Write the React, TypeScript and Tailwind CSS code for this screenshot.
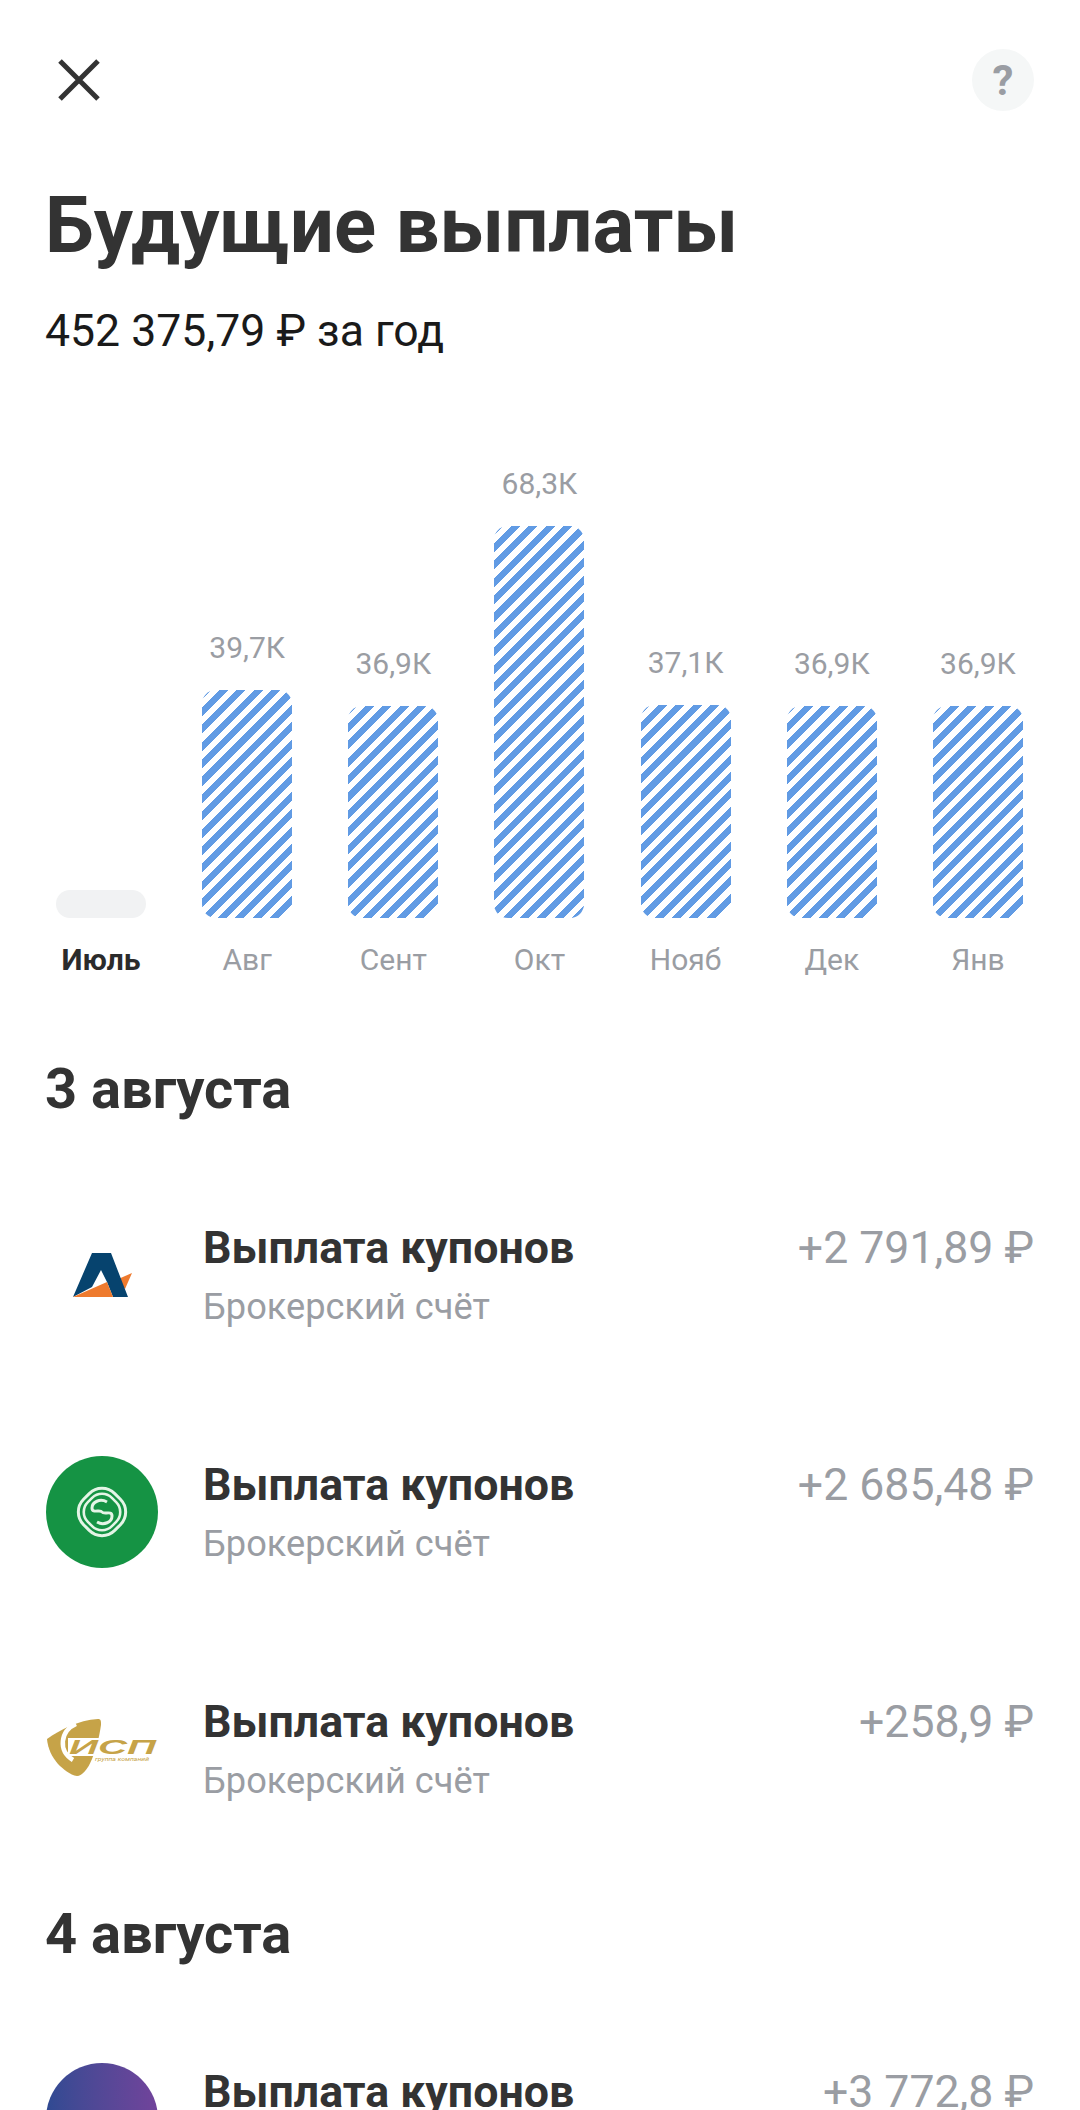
import React from 'react';

const bars = [
  { month: 'Июль', height: 'h-[28px]', active: true },
  { month: 'Авг', value: '39,7К', height: 'h-[228px]' },
  { month: 'Сент', value: '36,9К', height: 'h-[212px]' },
  { month: 'Окт', value: '68,3К', height: 'h-[392px]' },
  { month: 'Нояб', value: '37,1К', height: 'h-[213px]' },
  { month: 'Дек', value: '36,9К', height: 'h-[212px]' },
  { month: 'Янв', value: '36,9К', height: 'h-[212px]' },
];

// --- Logos ---

const LogoA = () => (
  <svg viewBox="0 0 112 112" className="w-[112px] h-[112px]">
    <path d="M70 61 L86 54 L79 70 Z" fill="#ee7a2e" />
    <path d="M27 78 L46 34 L65 34 L82 78 L67 78 L61 63 L55 51 L46 68 Z" fill="#06436e" />
    <path d="M27 78 L61 63 L67 78 Z" fill="#ee7a2e" />
  </svg>
);

const LogoGreen = () => (
  <div className="w-[112px] h-[112px] rounded-full bg-[#159344] flex items-center justify-center">
    <svg viewBox="0 0 60 60" className="w-[60px] h-[60px]" fill="none" stroke="#e4f5e6" strokeWidth="3">
      <rect x="8" y="8" width="44" height="44" rx="18" transform="rotate(45 30 30)" />
      <rect x="13" y="13" width="34" height="34" rx="14" transform="rotate(45 30 30)" strokeWidth="2.6" />
      <path d="M35 20 C28 16 20 20 20 26 C20 32 28 27 30 30 C32 33 40 28 40 34 C40 40 32 44 25 40" />
    </svg>
  </div>
);

const LogoGold = () => (
  <svg viewBox="0 0 112 112" className="w-[112px] h-[112px]">
    <path d="M1 46 C14 37 32 27 52 26 C55 26 55 28 55 32 C53 46 50 56 46 66 C42 76 36 83 31 83 C24 82 17 76 12 71 C6 64 2 56 1 46 Z" fill="#c6a348" />
    <path d="M30 31 C14 38 12 58 27 67" fill="none" stroke="#fff" strokeWidth="4.5" />
    <rect x="22" y="45" width="90" height="18" fill="#fff" />
    <text x="23" y="61" fontFamily="Liberation Sans, sans-serif" fontSize="21" fontWeight="700" fontStyle="italic" fill="#c6a348" textLength="87" lengthAdjust="spacingAndGlyphs">ИСП</text>
    <text x="49" y="68" fontFamily="Roboto, sans-serif" fontSize="5.5" fontStyle="italic" fill="#c6a348" textLength="54" lengthAdjust="spacingAndGlyphs">группа компаний</text>
  </svg>
);

const LogoPurple = () => (
  <div className="w-[112px] h-[112px] rounded-full bg-gradient-to-r from-[#2f4a92] to-[#71439b]" />
);

// --- Rows ---

const Payment = ({ logo, amount }: { logo: React.ReactNode; amount: string }) => (
  <div className="flex items-start h-[112px]">
    <div className="w-[112px] shrink-0">{logo}</div>
    <div className="ml-[45px] flex-1 pt-[5px]">
      <div className="text-[44.7px] leading-[48px] font-bold text-[#333333]">Выплата купонов</div>
      <div className="mt-[15px] text-[36.2px] leading-[40px] text-[#9a9da3]">Брокерский счёт</div>
    </div>
    <div className="pt-[5px] text-[44.6px] leading-[48px] text-[#9a9da3]">{amount}</div>
  </div>
);

export default function App() {
  return (
    <div className="w-[1080px] h-[2110px] overflow-hidden bg-white px-[46px] font-['Roboto',sans-serif]">
      {/* Header */}
      <div className="flex items-center justify-between pt-[49px]">
        <svg viewBox="0 0 42 42" className="w-[42px] h-[42px] ml-[12px]" fill="none" stroke="#333333" strokeWidth="5">
          <path d="M2 2 L40 40 M40 2 L2 40" />
        </svg>
        <div className="w-[62px] h-[62px] rounded-full bg-[#f5f7f7] flex items-center justify-center text-[42px] font-bold text-[#9a9da3]">?</div>
      </div>

      <h1 className="mt-[71px] -ml-[1px] text-[78px] leading-[88px] font-bold text-[#333333]">Будущие выплаты</h1>
      <p className="mt-[36px] -ml-[1px] text-[44.6px] leading-[50px] text-[#1a1a1a]">452 375,79 ₽ за год</p>

      {/* Chart */}
      <div className="mt-[110px] h-[452px] flex justify-between pl-[10px] pr-[11px]">
        {bars.map(bar => (
          <div key={bar.month} className="w-[90px] flex flex-col items-center justify-end">
            {bar.value && <div className="mb-[25px] text-[30px] leading-[34px] whitespace-nowrap text-[#9a9da3]">{bar.value}</div>}
            {bar.active ? (
              <div className={`w-[90px] rounded-[14px] bg-[#f1f2f3] ${bar.height}`} />
            ) : (
              <div className={`w-[90px] rounded-[14px] bg-[repeating-linear-gradient(135deg,#619be4_0px,#619be4_6.4px,#ffffff_6.4px,#ffffff_12.3px)] ${bar.height}`} />
            )}
          </div>
        ))}
      </div>
      <div className="mt-[24px] flex justify-between pl-[10px] pr-[11px]">
        {bars.map(bar => (
          <div key={bar.month} className={`w-[90px] text-center text-[30px] leading-[36px] whitespace-nowrap ${bar.active ? 'font-bold text-[#2b2b2b]' : 'text-[#9a9da3]'}`}>
            {bar.month}
          </div>
        ))}
      </div>

      {/* 3 августа */}
      <h2 className="mt-[80px] -ml-[1px] text-[56px] leading-[62px] font-bold text-[#333333]">3 августа</h2>
      <div className="mt-[99px] flex flex-col gap-[125px]">
        <Payment logo={<LogoA />} amount="+2 791,89 ₽" />
        <Payment logo={<LogoGreen />} amount="+2 685,48 ₽" />
        <Payment logo={<LogoGold />} amount="+258,9 ₽" />
      </div>

      {/* 4 августа */}
      <h2 className="mt-[98px] -ml-[1px] text-[56px] leading-[62px] font-bold text-[#333333]">4 августа</h2>
      <div className="mt-[98px]">
        <Payment logo={<LogoPurple />} amount="+3 772,8 ₽" />
      </div>
    </div>
  );
}
